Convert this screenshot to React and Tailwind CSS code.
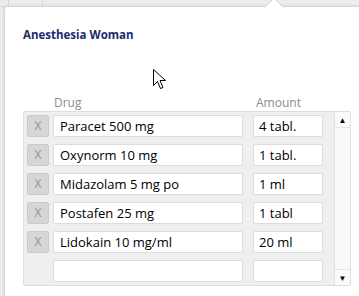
const rows = [
  { drug: 'Paracet 500 mg', amount: '4 tabl.' },
  { drug: 'Oxynorm 10 mg', amount: '1 tabl.' },
  { drug: 'Midazolam 5 mg po', amount: '1 ml' },
  { drug: 'Postafen 25 mg', amount: '1 tabl' },
  { drug: 'Lidokain 10 mg/ml', amount: '20 ml' },
  { drug: '', amount: '', empty: true },
];

function Cursor() {
  return (
    <svg className="absolute left-[148px] top-[62px]" width="14" height="21" viewBox="0 0 14 21">
      <path d="M0.5 0.5 L0.5 16.5 L4.5 12.5 L7.5 19.5 L10 18.5 L7 11.5 L12.5 11.5 Z" fill="#fff" stroke="#000" strokeWidth="1" />
    </svg>
  );
}

export default function App() {
  return (
    <div className="relative w-[359px] h-[296px] overflow-hidden bg-[#ececec] font-['Open_Sans',sans-serif]">
      {/* fond derrière le popup */}
      <div className="flex h-[7px] border-b border-[#dcdcdc]">
        <div className="w-[9px] border-r border-[#d8d8d8]" />
        <div className="w-[34px] border-r border-[#d8d8d8]" />
      </div>

      <div className="absolute left-[4px] top-[6px] right-0 bottom-0 bg-white rounded-tl-[3px] border-l border-t border-[#d6d6d6] shadow-[0_0_3px_rgba(0,0,0,0.12)]">
        <div className="absolute -top-[7px] left-[262px] w-[14px] h-[14px] rotate-45 bg-white border-l border-t border-[#d6d6d6]" />

        <div className="relative px-[18px] pt-[20px]">
          <h1 className="text-[11.5px] font-bold text-[#1b2a6b] leading-[16px]">Anesthesia Woman</h1>

          <div className="mt-[52px] flex text-[12px] text-[#8c8c8c] leading-[16px]">
            <span className="ml-[31px] w-[202px]">Drug</span>
            <span>Amount</span>
          </div>

          <div className="flex w-[328px] h-[175px] bg-[#efefef] border border-[#dedede] rounded-[2px]">
            <div className="flex-1 flex flex-col gap-[7px] pt-[3px] pl-[3px]">
              {rows.map((r, i) => (
                <div key={i} className="flex items-center h-[22px]">
                  {r.empty ? (
                    <div className="w-[22px]" />
                  ) : (
                    <button className="w-[22px] h-[22px] bg-[#d6d6d6] border border-[#cbcbcb] rounded-[2px] text-[12px] text-[#939393] leading-none">X</button>
                  )}
                  <div className="ml-[4px] w-[190px] h-[22px] bg-white border border-[#dcdcdc] rounded-[2px] pl-[6px] text-[13px] text-black leading-[20px]">{r.drug}</div>
                  <div className="ml-[10px] w-[70px] h-[22px] bg-white border border-[#dcdcdc] rounded-[2px] pl-[5px] text-[13px] text-black leading-[20px]">{r.amount}</div>
                </div>
              ))}
            </div>
            <div className="w-[16px] flex flex-col justify-between bg-[#fafafa] border-l border-[#e0e0e0]">
              <div className="h-[16px] border-b border-[#e6e6e6] flex items-center justify-center text-[8px] text-black">▲</div>
              <div className="h-[16px] border-t border-[#e6e6e6] flex items-center justify-center text-[8px] text-black">▼</div>
            </div>
          </div>
        </div>

        <Cursor />
      </div>
    </div>
  );
}
